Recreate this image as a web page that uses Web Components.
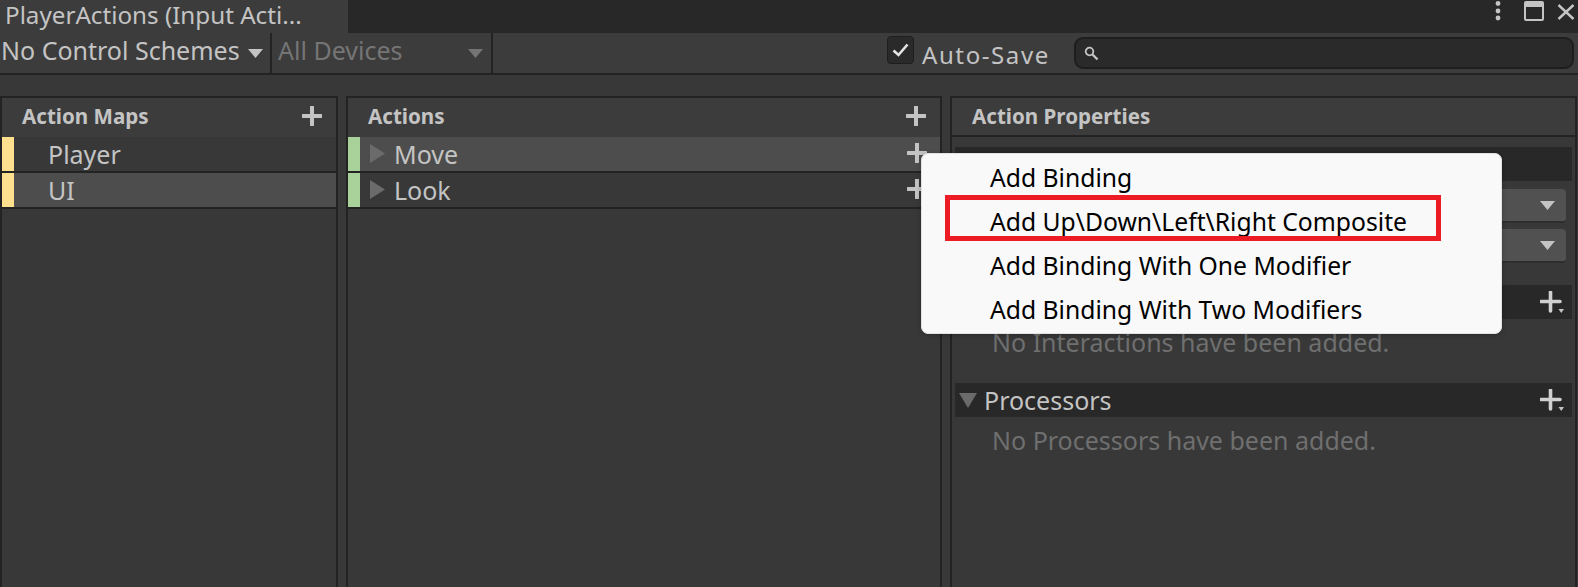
<!DOCTYPE html>
<html>
<head>
<meta charset="utf-8">
<title>PlayerActions</title>
<style>
    html, body { margin: 0; height: 100%; overflow: hidden; background: #383838; }
    body { font-family: "Noto Sans", "Open Sans", sans-serif; color: #c4c4c4; }
</style>
</head>
<body>
<input-actions-window></input-actions-window>

<script>
// Icono "+" compartido
const PLUS = `<svg width="20" height="20" viewBox="0 0 20 20"><path d="M10 1v18M1 10h18" stroke="#c4c4c4" stroke-width="4" stroke-linecap="round"/></svg>`;

class IaTabbar extends HTMLElement {
    constructor() {
        super();
        this.attachShadow({ mode: 'open' });
        this.shadowRoot.innerHTML = `
            <style>
                :host { display: flex; height: 33px; background: #282828; align-items: stretch; }
                .tab { width: 343px; height: 33px; padding-left: 5px; background: #3c3c3c; font-size: 24.2px; line-height: 30px; white-space: nowrap; }
                .icons { margin-left: auto; display: flex; align-items: flex-start; }
                .kebab { margin: 0; }
                .max { margin: 1px 0 0 23px; }
                .close { margin: 4px 3px 0 13px; }
                svg { display: block; }
            </style>
            <div class="tab"><slot></slot></div>
            <div class="icons">
                <svg class="kebab" width="6" height="21" viewBox="0 0 6 21" fill="#c4c4c4"><circle cx="3" cy="3.5" r="2.4"/><circle cx="3" cy="11" r="2.4"/><circle cx="3" cy="18" r="2.4"/></svg>
                <svg class="max" width="20" height="20" viewBox="0 0 20 20"><rect x="1" y="1" width="18" height="18" rx="1" fill="none" stroke="#c4c4c4" stroke-width="2"/><rect x="1" y="1" width="18" height="5" fill="#c4c4c4"/></svg>
                <svg class="close" width="18" height="16" viewBox="0 0 18 16"><path d="M1.5 1l15 14M16.5 1l-15 14" stroke="#c4c4c4" stroke-width="2.4"/></svg>
            </div>
        `;
    }
}
customElements.define('ia-tabbar', IaTabbar);

class IaDropdown extends HTMLElement {
    constructor() {
        super();
        this.attachShadow({ mode: 'open' });
    }

    connectedCallback() {
        const width = this.getAttribute('width');
        const tone = this.hasAttribute('disabled') ? '#757575' : '#c4c4c4';
        this.shadowRoot.innerHTML = `
            <style>
                :host { display: flex; align-items: center; justify-content: space-between; box-sizing: border-box; width: ${width}px; border-right: 2px solid #232323; color: ${tone}; font-size: 25px; white-space: nowrap; padding: 0 ${this.getAttribute('pad-right')}px 6px ${this.getAttribute('pad-left')}px; }
                svg { display: block; margin-top: 6px; flex: none; }
            </style>
            <slot></slot>
            <svg width="15" height="9" viewBox="0 0 15 9"><path d="M0 0h15L7.5 9z" fill="${tone}"/></svg>
        `;
    }
}
customElements.define('ia-dropdown', IaDropdown);

class IaToolbar extends HTMLElement {
    constructor() {
        super();
        this.attachShadow({ mode: 'open' });
        this.shadowRoot.innerHTML = `
            <style>
                :host { display: flex; box-sizing: border-box; height: 42px; background: #3c3c3c; border-bottom: 2px solid #232323; }
                .auto { margin-left: 394px; display: flex; align-items: flex-start; }
                .check { box-sizing: border-box; width: 27px; height: 28px; margin-top: 3px; background: #2a2a2a; border: 1px solid #1e1e1e; border-radius: 4px; display: flex; align-items: center; justify-content: center; }
                .label { margin: 5px 0 0 8px; font-size: 24px; line-height: 34px; letter-spacing: 1.6px; white-space: nowrap; }
                .search { box-sizing: border-box; width: 500px; height: 32px; margin: 4px 4px 0 auto; background: #2a2a2a; border: 2px solid #1e1e1e; border-radius: 9px; display: flex; align-items: center; padding-left: 8px; }
                svg { display: block; }
            </style>
            <ia-dropdown width="272" pad-left="1" pad-right="7">No Control Schemes</ia-dropdown>
            <ia-dropdown width="221" pad-left="6" pad-right="8" disabled>All Devices</ia-dropdown>
            <div class="auto">
                <div class="check"><svg width="17" height="14" viewBox="0 0 17 14"><path d="M1.5 7.5l5 4.5L15.5 1.5" fill="none" stroke="#e4e4e4" stroke-width="2.6"/></svg></div>
                <div class="label">Auto-Save</div>
            </div>
            <div class="search"><svg width="15" height="15" viewBox="0 0 15 15"><circle cx="5.5" cy="5.5" r="3.8" fill="none" stroke="#c4c4c4" stroke-width="1.8"/><path d="M8.5 8.5l5 5" stroke="#c4c4c4" stroke-width="2.4"/></svg></div>
        `;
    }
}
customElements.define('ia-toolbar', IaToolbar);

class IaPanel extends HTMLElement {
    constructor() {
        super();
        this.attachShadow({ mode: 'open' });
    }

    connectedCallback() {
        const plus = this.hasAttribute('no-add') ? '' : PLUS;
        const line = this.hasAttribute('header-line');
        this.shadowRoot.innerHTML = `
            <style>
                :host { display: flex; flex-direction: column; box-sizing: border-box; min-width: 0; border: 2px solid #232323; border-bottom: 0; }
                header { box-sizing: border-box; height: 39px; flex: none; display: flex; align-items: center; justify-content: space-between; padding: 0 14px ${line ? '2px' : '4px'} 20px; background: #3c3c3c; border-bottom: ${line ? '2px solid #232323' : '0'}; font-size: 20.6px; font-weight: 700; }
                svg { display: block; }
            </style>
            <header><span>${this.getAttribute('heading')}</span>${plus}</header>
            <slot></slot>
        `;
    }
}
customElements.define('ia-panel', IaPanel);

class IaRow extends HTMLElement {
    constructor() {
        super();
        this.attachShadow({ mode: 'open' });
    }

    connectedCallback() {
        const selected = this.hasAttribute('selected');
        const isAction = this.getAttribute('kind') === 'action';
        const color = isAction ? '#a8d29a' : '#ffe08e';
        this.shadowRoot.innerHTML = `
            <style>
                :host { display: flex; align-items: stretch; box-sizing: border-box; height: 36px; border-bottom: 2px solid #232323; background: ${selected ? '#4d4d4d' : '#383838'}; font-size: 25px; }
                .bar { width: 12px; flex: none; background: ${color}; }
                .name { line-height: 35px; padding-left: ${isAction ? '9px' : '34px'}; }
                .arrow { margin: 7px 0 0 10px; flex: none; }
                .add { margin: 6px 13px 0 auto; }
                svg { display: block; }
            </style>
            <div class="bar"></div>
            ${isAction ? '<svg class="arrow" width="15" height="19" viewBox="0 0 15 19"><path d="M0 0l15 9.5L0 19z" fill="#6b6b6b"/></svg>' : ''}
            <div class="name"><slot></slot></div>
            ${isAction ? `<div class="add">${PLUS}</div>` : ''}
        `;
    }
}
customElements.define('ia-row', IaRow);

class IaSection extends HTMLElement {
    constructor() {
        super();
        this.attachShadow({ mode: 'open' });
    }

    connectedCallback() {
        const add = this.hasAttribute('add') ? `
            <svg class="add" width="24" height="22" viewBox="0 0 24 22"><path d="M10.5 1v19M1 10.5h19" stroke="#d0d0d0" stroke-width="3.6" stroke-linecap="round"/><path d="M18.5 18h5.5l-2.75 4z" fill="#c4c4c4"/></svg>` : '';
        this.shadowRoot.innerHTML = `
            <style>
                :host { display: block; }
                header { height: 34px; display: flex; align-items: center; background: #282828; padding: 0 8px 0 4px; font-size: 25px; }
                .tri { margin-right: 7px; flex: none; }
                .add { margin-left: auto; }
                svg { display: block; }
            </style>
            <header>
                <svg class="tri" width="18" height="15" viewBox="0 0 18 15"><path d="M0 0h18L9 15z" fill="#6b6b6b"/></svg>
                <span>${this.getAttribute('heading') || ''}</span>${add}
            </header>
            <slot></slot>
        `;
    }
}
customElements.define('ia-section', IaSection);

class IaField extends HTMLElement {
    constructor() {
        super();
        this.attachShadow({ mode: 'open' });
        this.shadowRoot.innerHTML = `
            <style>
                :host { display: flex; align-items: center; justify-content: flex-end; box-sizing: border-box; height: 34px; margin: 0 6px 0 250px; padding-right: 11px; background: #515151; border-radius: 4px; border-bottom: 2px solid #2e2e2e; }
                svg { display: block; }
            </style>
            <svg width="15" height="9" viewBox="0 0 15 9"><path d="M0 0h15L7.5 9z" fill="#c4c4c4"/></svg>
        `;
    }
}
customElements.define('ia-field', IaField);

class IaEmpty extends HTMLElement {
    constructor() {
        super();
        this.attachShadow({ mode: 'open' });
        this.shadowRoot.innerHTML = `
            <style>
                :host { display: block; box-sizing: border-box; height: 64px; padding: 6px 0 0 37px; color: #6f6f6f; font-size: 25px; line-height: 34px; white-space: nowrap; }
            </style>
            <slot></slot>
        `;
    }
}
customElements.define('ia-empty', IaEmpty);

class IaMenu extends HTMLElement {
    constructor() {
        super();
        this.attachShadow({ mode: 'open' });
        this.shadowRoot.innerHTML = `
            <style>
                :host { position: absolute; left: 921px; top: 153px; box-sizing: border-box; width: 581px; height: 181px; padding: 2px 0; background: #f9f9f9; border: 1px solid #e2e2e2; border-radius: 7px; box-shadow: 0 1px 5px rgba(0,0,0,.25); color: #000; font-size: 24.7px; }
            </style>
            <slot></slot>
        `;
    }
}
customElements.define('ia-menu', IaMenu);

class IaMenuItem extends HTMLElement {
    constructor() {
        super();
        this.attachShadow({ mode: 'open' });
        this.shadowRoot.innerHTML = `
            <style>
                :host { display: block; position: relative; height: 44px; line-height: 44px; padding-left: 68px; white-space: nowrap; }
                :host([marked])::after { content: ""; position: absolute; left: 23px; top: -5px; width: 496px; height: 46px; box-sizing: border-box; border: 5px solid #ed1c24; }
            </style>
            <slot></slot>
        `;
    }
}
customElements.define('ia-menu-item', IaMenuItem);

class InputActionsWindow extends HTMLElement {
    constructor() {
        super();
        this.attachShadow({ mode: 'open' });
        this.shadowRoot.innerHTML = `
            <style>
                :host { display: flex; flex-direction: column; height: 587px; position: relative; overflow: hidden; background: #383838; }
                .columns { flex: 1; display: grid; grid-template-columns: 338px 596px 1fr; gap: 8px; margin-top: 21px; padding-right: 1px; min-height: 0; }
                .props { padding: 10px 3px; }
                .fields { height: 104px; padding-top: 8px; box-sizing: border-box; display: flex; flex-direction: column; gap: 6px; }
            </style>
            <ia-tabbar>PlayerActions (Input Acti...</ia-tabbar>
            <ia-toolbar></ia-toolbar>
            <div class="columns">
                <ia-panel heading="Action Maps">
                    <ia-row kind="map">Player</ia-row>
                    <ia-row kind="map" selected>UI</ia-row>
                </ia-panel>
                <ia-panel heading="Actions">
                    <ia-row kind="action" selected>Move</ia-row>
                    <ia-row kind="action">Look</ia-row>
                </ia-panel>
                <ia-panel heading="Action Properties" no-add header-line>
                    <div class="props">
                        <ia-section>
                            <div class="fields"><ia-field></ia-field><ia-field></ia-field></div>
                        </ia-section>
                        <ia-section add>
                            <ia-empty>No Interactions have been added.</ia-empty>
                        </ia-section>
                        <ia-section add heading="Processors">
                            <ia-empty>No Processors have been added.</ia-empty>
                        </ia-section>
                    </div>
                </ia-panel>
            </div>
            <ia-menu>
                <ia-menu-item>Add Binding</ia-menu-item>
                <ia-menu-item marked>Add Up\\Down\\Left\\Right Composite</ia-menu-item>
                <ia-menu-item>Add Binding With One Modifier</ia-menu-item>
                <ia-menu-item>Add Binding With Two Modifiers</ia-menu-item>
            </ia-menu>
        `;
    }
}
customElements.define('input-actions-window', InputActionsWindow);
</script>
</body>
</html>
